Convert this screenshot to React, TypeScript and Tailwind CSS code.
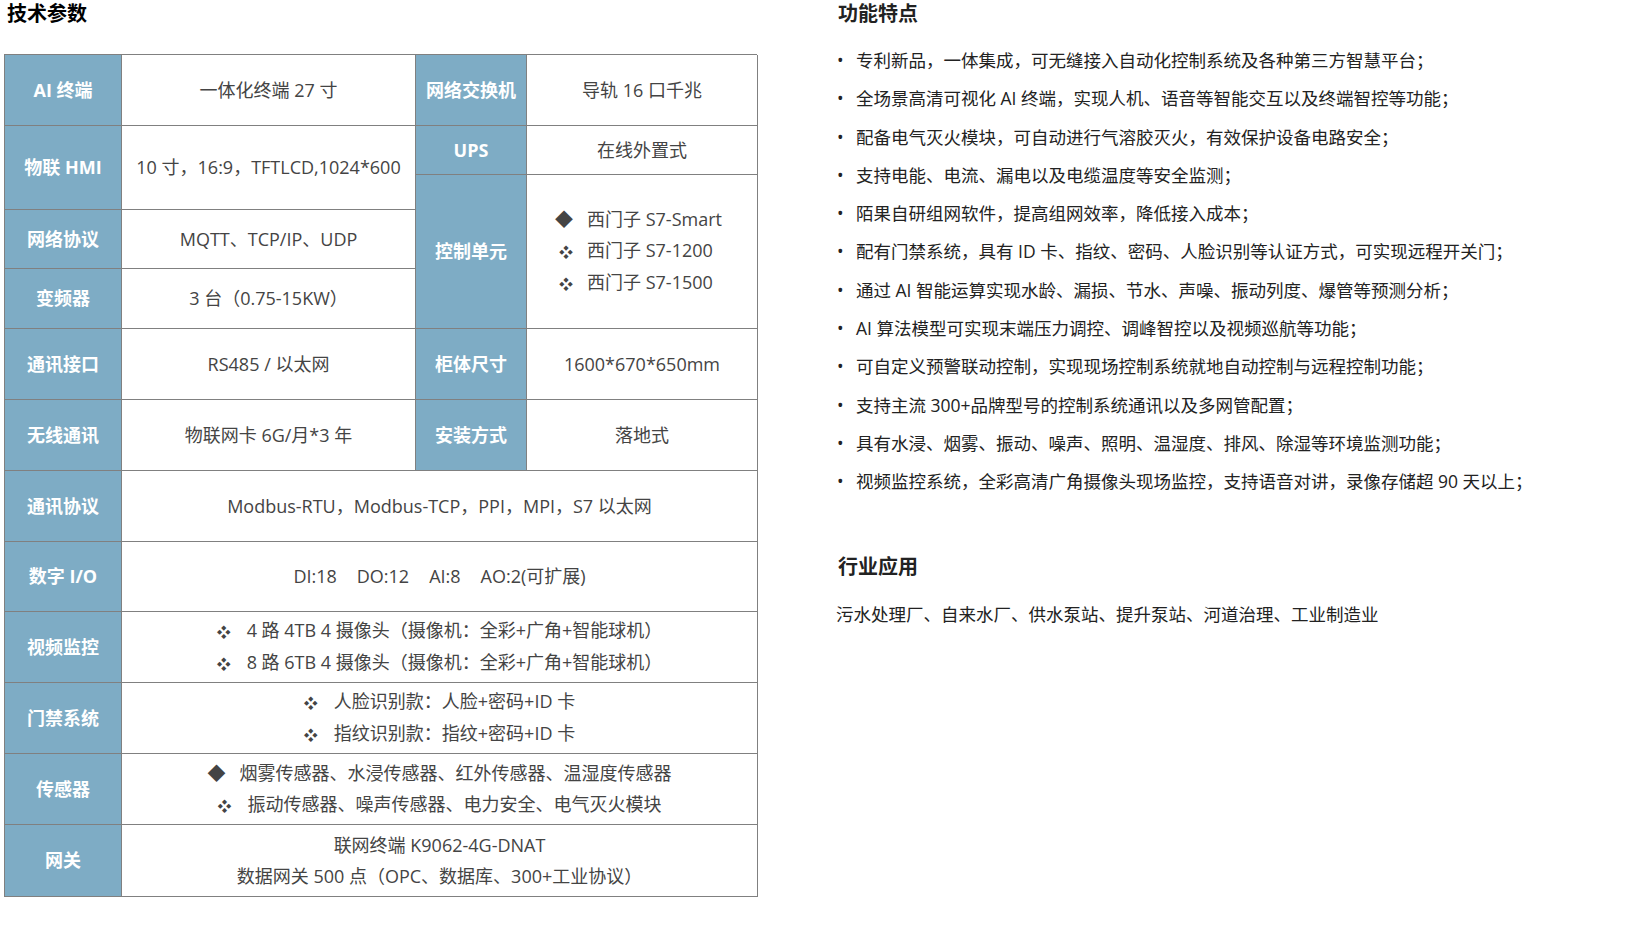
const H = "bg-[#7eacc5] text-white font-bold text-[18px] flex items-center justify-center border-r border-b border-[#808080]";
const C = "bg-white text-[#444] text-[18px] flex flex-col items-center justify-center border-r border-b border-[#808080]";

const features = [
  "专利新品，一体集成，可无缝接入自动化控制系统及各种第三方智慧平台；",
  "全场景高清可视化 AI 终端，实现人机、语音等智能交互以及终端智控等功能；",
  "配备电气灭火模块，可自动进行气溶胶灭火，有效保护设备电路安全；",
  "支持电能、电流、漏电以及电缆温度等安全监测；",
  "陌果自研组网软件，提高组网效率，降低接入成本；",
  "配有门禁系统，具有 ID 卡、指纹、密码、人脸识别等认证方式，可实现远程开关门；",
  "通过 AI 智能运算实现水龄、漏损、节水、声噪、振动列度、爆管等预测分析；",
  "AI 算法模型可实现末端压力调控、调峰智控以及视频巡航等功能；",
  "可自定义预警联动控制，实现现场控制系统就地自动控制与远程控制功能；",
  "支持主流 300+品牌型号的控制系统通讯以及多网管配置；",
  "具有水浸、烟雾、振动、噪声、照明、温湿度、排风、除湿等环境监测功能；",
  "视频监控系统，全彩高清广角摄像头现场监控，支持语音对讲，录像存储超 90 天以上；",
];

export default function App() {
  return (
    <div className="w-[1639px] h-[941px] bg-white relative" style={{ fontFamily: '"Open Sans","Noto Sans CJK SC",sans-serif' }}>
      <div className="flex">
        <div className="w-[800px] pl-[4px]">
          <div className="text-[20px] font-bold text-black pl-[3px] h-[54px] leading-[28px] pt-0">技术参数</div>
          <div
            className="grid w-[753px] border-t border-l border-[#808080]"
            style={{ gridTemplateColumns: "117px 294px 111px 231px", gridTemplateRows: "71px 49px 35px 59px 60px 71px 71px 71px 70px 71px 71px 71px 72px" }}
          >
            <div className={H}>AI 终端</div>
            <div className={C}>一体化终端 27 寸</div>
            <div className={H}>网络交换机</div>
            <div className={C}>导轨 16 口千兆</div>

            <div className={H + " row-span-2"}>物联 HMI</div>
            <div className={C + " row-span-2"}>10 寸，16:9，TFTLCD,1024*600</div>
            <div className={H}>UPS</div>
            <div className={C}>在线外置式</div>

            <div className={H + " row-span-3"}>控制单元</div>
            <div className={C + " row-span-3 items-start pl-[28px] leading-[31px]"}>
              <div><span className="mr-[14px]">◆</span>西门子 S7-Smart</div>
              <div><span className="ml-[4px] mr-[14px] text-[14px]">❖</span>西门子 S7-1200</div>
              <div><span className="ml-[4px] mr-[14px] text-[14px]">❖</span>西门子 S7-1500</div>
            </div>

            <div className={H + " col-start-1 row-start-4"}>网络协议</div>
            <div className={C + " col-start-2 row-start-4"}>MQTT、TCP/IP、UDP</div>
            <div className={H + " col-start-1 row-start-5"}>变频器</div>
            <div className={C + " col-start-2 row-start-5"}>3 台（0.75-15KW）</div>

            <div className={H}>通讯接口</div>
            <div className={C}>RS485 / 以太网</div>
            <div className={H}>柜体尺寸</div>
            <div className={C}>1600*670*650mm</div>

            <div className={H}>无线通讯</div>
            <div className={C}>物联网卡 6G/月*3 年</div>
            <div className={H}>安装方式</div>
            <div className={C}>落地式</div>

            <div className={H}>通讯协议</div>
            <div className={C + " col-span-3"}>Modbus-RTU，Modbus-TCP，PPI，MPI，S7 以太网</div>

            <div className={H}>数字 I/O</div>
            <div className={C + " col-span-3"}><div className="flex gap-[20px]"><span>DI:18</span><span>DO:12</span><span>AI:8</span><span>AO:2(可扩展)</span></div></div>

            <div className={H}>视频监控</div>
            <div className={C + " col-span-3 leading-[31px]"}>
              <div><span className="mr-[16px] text-[14px]">❖</span>4 路 4TB 4 摄像头（摄像机：全彩+广角+智能球机）</div>
              <div><span className="mr-[16px] text-[14px]">❖</span>8 路 6TB 4 摄像头（摄像机：全彩+广角+智能球机）</div>
            </div>

            <div className={H}>门禁系统</div>
            <div className={C + " col-span-3 leading-[31px]"}>
              <div><span className="mr-[16px] text-[14px]">❖</span>人脸识别款：人脸+密码+ID 卡</div>
              <div><span className="mr-[16px] text-[14px]">❖</span>指纹识别款：指纹+密码+ID 卡</div>
            </div>

            <div className={H}>传感器</div>
            <div className={C + " col-span-3 leading-[31px]"}>
              <div><span className="mr-[14px]">◆</span>烟雾传感器、水浸传感器、红外传感器、温湿度传感器</div>
              <div><span className="mr-[16px] text-[14px]">❖</span>振动传感器、噪声传感器、电力安全、电气灭火模块</div>
            </div>

            <div className={H}>网关</div>
            <div className={C + " col-span-3 leading-[31px]"}>
              <div>联网终端 K9062-4G-DNAT</div>
              <div>数据网关 500 点（OPC、数据库、300+工业协议）</div>
            </div>
          </div>
        </div>
        <div className="pl-[36px] pt-0 text-[#222]">
          <div className="text-[20px] font-bold leading-[28px] pl-[2px]">功能特点</div>
          <ul className="mt-[20px]">
            {features.map((f) => (
              <li key={f} className="flex text-[17.5px] h-[38.3px] leading-[24px] whitespace-nowrap">
                <span className="w-[20px] pl-[1px]">•</span>
                <span>{f}</span>
              </li>
            ))}
          </ul>
          <div className="text-[20px] font-bold leading-[28px] mt-[45px] pl-[2px]">行业应用</div>
          <div className="text-[17.5px] mt-[20px]">污水处理厂、自来水厂、供水泵站、提升泵站、河道治理、工业制造业</div>
        </div>
      </div>
    </div>
  );
}
